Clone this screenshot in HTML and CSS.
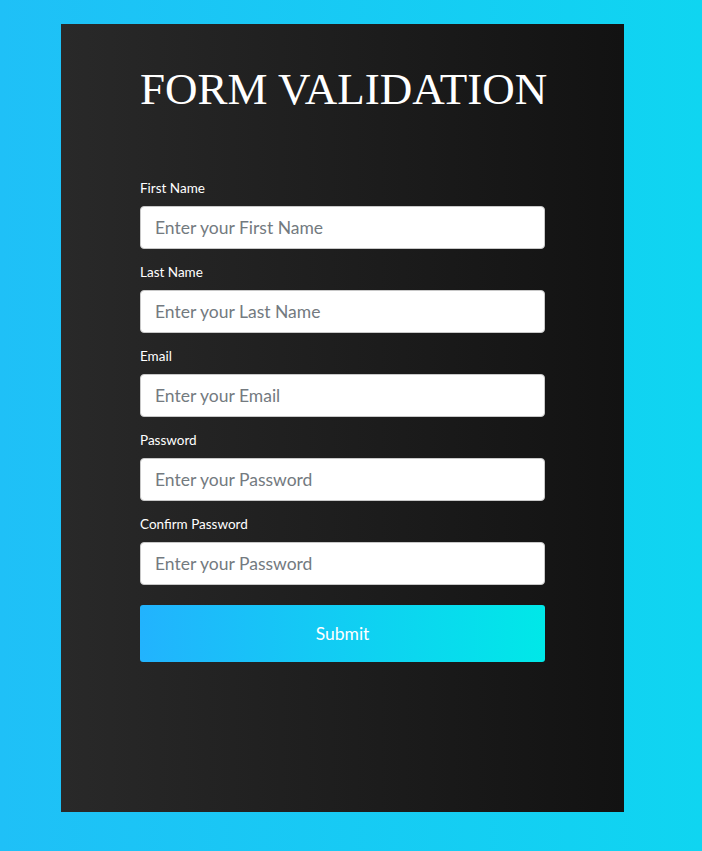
FILE: index.html
```html
<!DOCTYPE html>
<html>
<head>
<meta charset="utf-8">
<link rel="stylesheet" href="styles.css">
</head>
<body>
<div class="card">
  <h1 class="title">FORM VALIDATION</h1>
  <form class="form">
    <div class="field">
      <label class="label">First Name</label>
      <input class="input" type="text" placeholder="Enter your First Name">
    </div>
    <div class="field">
      <label class="label">Last Name</label>
      <input class="input" type="text" placeholder="Enter your Last Name">
    </div>
    <div class="field">
      <label class="label">Email</label>
      <input class="input" type="text" placeholder="Enter your Email">
    </div>
    <div class="field">
      <label class="label">Password</label>
      <input class="input" type="password" placeholder="Enter your Password">
    </div>
    <div class="field">
      <label class="label">Confirm Password</label>
      <input class="input" type="password" placeholder="Enter your Password">
    </div>
    <button class="submit" type="button">Submit</button>
  </form>
</div>
</body>
</html>
```
FILE: styles.css
```css
html, body {
  margin: 0;
  padding: 0;
}
body {
  min-height: 851px;
  background: linear-gradient(90deg, #1fc0f7 0%, #0fd5f1 100%);
  padding-top: 24px;
  box-sizing: border-box;
  font-family: "Lato", "Open Sans", sans-serif;
}
.card {
  margin-left: 61px;
  width: 563px;
  height: 788px;
  box-sizing: border-box;
  padding: 0 79px;
  background: linear-gradient(90deg, #292929 0%, #121212 100%);
  display: flex;
  flex-direction: column;
}
.title {
  margin: 35px 0 0 0;
  font-family: "Liberation Serif", serif;
  font-weight: normal;
  font-size: 45px;
  line-height: 60px;
  color: #fff;
  text-align: center;
  white-space: nowrap;
}
.form {
  margin-top: 61px;
  display: flex;
  flex-direction: column;
}
.field {
  display: flex;
  flex-direction: column;
  margin-bottom: 15px;
}
.label {
  color: #fff;
  font-size: 13.5px;
  line-height: 16px;
  margin-bottom: 10px;
}
.input {
  height: 43px;
  box-sizing: border-box;
  border: 1px solid #c8c8c8;
  border-radius: 4px;
  background: #fff;
  padding: 0 14px;
  font-family: "Lato", "Open Sans", sans-serif;
  font-size: 17.5px;
  color: #333;
  outline: none;
}
.input::placeholder {
  color: #737a80;
}
.submit {
  margin-top: 5px;
  height: 57px;
  border: none;
  border-radius: 3px;
  background: linear-gradient(90deg, #22b3fe 0%, #00e8e8 100%);
  color: #fff;
  font-family: "Lato", "Open Sans", sans-serif;
  font-size: 17.5px;
  cursor: pointer;
}
```
